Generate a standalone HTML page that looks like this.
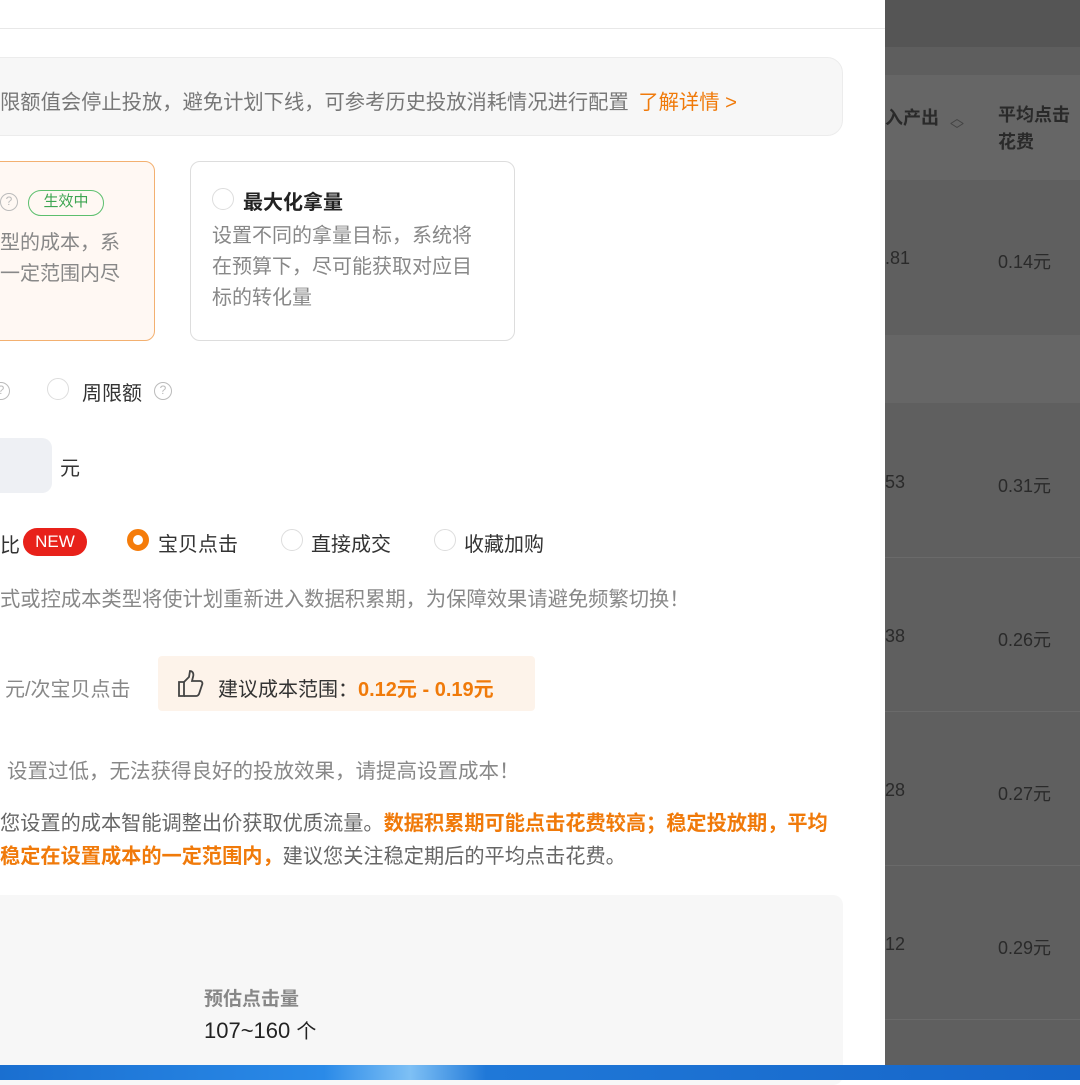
<!DOCTYPE html>
<html><head><meta charset="utf-8"><style>
*{margin:0;padding:0;box-sizing:border-box}
body{width:1080px;height:1080px;overflow:hidden;position:relative;background:#fff;font-family:"Liberation Sans","Noto Sans CJK SC",sans-serif;color:#333}
.a{position:absolute;white-space:nowrap}
.g{color:#888}
.o{color:#f07a0a}
.rad{position:absolute;width:22px;height:22px;border:1.5px solid #ddd;border-radius:50%;background:#fff}
.q{position:absolute;width:18px;height:18px;border:1.5px solid #bbb;border-radius:50%;color:#bbb;font-size:12px;text-align:center;line-height:15px}
.r{position:absolute;left:885px;width:195px}
.rt{position:absolute;color:#2a2a2a;font-size:18px;white-space:nowrap}
</style></head><body>
<div class="a" style="left:0;top:28px;width:885px;height:1px;background:#e8e8e8"></div>
<div class="a" style="left:-20px;top:57px;width:863px;height:79px;background:#f7f7f7;border:1px solid #ececec;border-radius:16px"></div>
<div class="a g" style="left:0;top:85px;font-size:20.3px;color:#777">限额值会停止投放，避免计划下线，可参考历史投放消耗情况进行配置 <span class="o" style="margin-left:4px">了解详情 &gt;</span></div>

<div class="a" style="left:-20px;top:161px;width:175px;height:180px;border:1.5px solid #f3b070;border-radius:10px;background:#fff8f3"></div>
<div class="q" style="left:0;top:193px">?</div>
<div class="a" style="left:28px;top:190px;width:76px;height:26px;border:1.5px solid #5cbf6e;border-radius:13px;color:#3ea552;font-size:15px;text-align:center;line-height:22px">生效中</div>
<div class="a g" style="left:0;top:228px;font-size:20px;line-height:31px">型的成本，系<br>一定范围内尽</div>

<div class="a" style="left:190px;top:161px;width:325px;height:180px;border:1.5px solid #ddd;border-radius:10px"></div>
<div class="rad" style="left:212px;top:188px"></div>
<div class="a" style="left:243px;top:186px;font-size:20px;font-weight:bold;color:#222">最大化拿量</div>
<div class="a g" style="left:212px;top:221px;font-size:20px;line-height:31px">设置不同的拿量目标，系统将<br>在预算下，尽可能获取对应目<br>标的转化量</div>

<div class="q" style="left:-8px;top:382px">?</div>
<div class="rad" style="left:47px;top:378px"></div>
<div class="a" style="left:82px;top:377px;font-size:20px">周限额</div>
<div class="q" style="left:154px;top:382px">?</div>

<div class="a" style="left:-20px;top:438px;width:72px;height:55px;background:#eef0f4;border-radius:10px"></div>
<div class="a" style="left:60px;top:452px;font-size:20px">元</div>

<div class="a" style="left:0;top:529px;font-size:20px">比</div>
<div class="a" style="left:23px;top:528px;width:64px;height:28px;background:#e8211a;border-radius:14px;color:#fff;font-size:17px;text-align:center;line-height:28px">NEW</div>
<div class="rad" style="left:127px;top:529px;border:6px solid #f57c0a"></div>
<div class="a" style="left:158px;top:528px;font-size:20px">宝贝点击</div>
<div class="rad" style="left:281px;top:529px"></div>
<div class="a" style="left:311px;top:528px;font-size:20px">直接成交</div>
<div class="rad" style="left:434px;top:529px"></div>
<div class="a" style="left:464px;top:528px;font-size:20px">收藏加购</div>

<div class="a g" style="left:0;top:582px;font-size:20.3px">式或控成本类型将使计划重新进入数据积累期，为保障效果请避免频繁切换！</div>

<div class="a g" style="left:5px;top:673px;font-size:20px">元/次宝贝点击</div>
<div class="a" style="left:158px;top:656px;width:377px;height:55px;background:#fdf3ea;border-radius:4px"></div>
<svg class="a" style="left:176px;top:669px" width="30" height="30" viewBox="0 0 30 30" fill="none" stroke="#444" stroke-width="1.8"><path d="M3 13h5v14H3z"/><path d="M8 13l5-5 1-6c3 0 4 3 3 6l-1 4h8c2 0 3 2 2 4l-3 9c-1 2-2 2-3 2H8"/></svg>
<div class="a" style="left:218px;top:673px;font-size:20px">建议成本范围：<b class="o">0.12元 - 0.19元</b></div>

<div class="a g" style="left:7px;top:754px;font-size:20.5px">设置过低，无法获得良好的投放效果，请提高设置成本！</div>
<div class="a g" style="left:0;top:808px;font-size:20.2px;line-height:33px;color:#666">您设置的成本智能调整出价获取优质流量。<span class="o" style="font-weight:bold">数据积累期可能点击花费较高；稳定投放期，平均</span><br><span class="o" style="font-weight:bold">稳定在设置成本的一定范围内，</span>建议您关注稳定期后的平均点击花费。</div>

<div class="a" style="left:-20px;top:895px;width:863px;height:190px;background:#f7f7f7;border-radius:10px"></div>
<div class="a" style="left:204px;top:984px;font-size:19px;color:#888;font-weight:bold">预估点击量</div>
<div class="a" style="left:204px;top:1015px;font-size:22px;color:#222">107~160 <span style="font-size:20px">个</span></div>

<div class="r" style="top:0;height:47px;background:#555"></div>
<div class="r" style="top:47px;height:28px;background:#5e5e5e"></div>
<div class="r" style="top:75px;height:105px;background:#666"></div>
<div class="r" style="top:180px;height:155px;background:#5f5f5f"></div>
<div class="r" style="top:335px;height:68px;background:#666"></div>
<div class="r" style="top:403px;height:662px;background:#5f5f5f"></div>
<div class="r" style="top:557px;height:1px;background:#6a6a6a"></div>
<div class="r" style="top:711px;height:1px;background:#6a6a6a"></div>
<div class="r" style="top:865px;height:1px;background:#6a6a6a"></div>
<div class="r" style="top:1019px;height:1px;background:#6a6a6a"></div>
<div class="rt" style="left:885px;top:104px;font-weight:bold">入产出</div>
<div class="rt" style="left:950px;top:112px;color:#444;font-size:14px;line-height:12px">︿<br>﹀</div>
<div class="rt" style="left:998px;top:102px;font-weight:bold;line-height:27px">平均点击<br>花费</div>
<div class="rt" style="left:885px;top:248px">.81</div><div class="rt" style="left:998px;top:248px">0.14元</div>
<div class="rt" style="left:885px;top:472px">53</div><div class="rt" style="left:998px;top:472px">0.31元</div>
<div class="rt" style="left:885px;top:626px">38</div><div class="rt" style="left:998px;top:626px">0.26元</div>
<div class="rt" style="left:885px;top:780px">28</div><div class="rt" style="left:998px;top:780px">0.27元</div>
<div class="rt" style="left:885px;top:934px">12</div><div class="rt" style="left:998px;top:934px">0.29元</div>

<div class="a" style="left:0;top:1065px;width:1080px;height:15px;background:linear-gradient(90deg,#1a6fd0,#2a8ae8 30%,#7ec0f5 38%,#1f78d8 45%,#1665c8)"></div>
</body></html>
